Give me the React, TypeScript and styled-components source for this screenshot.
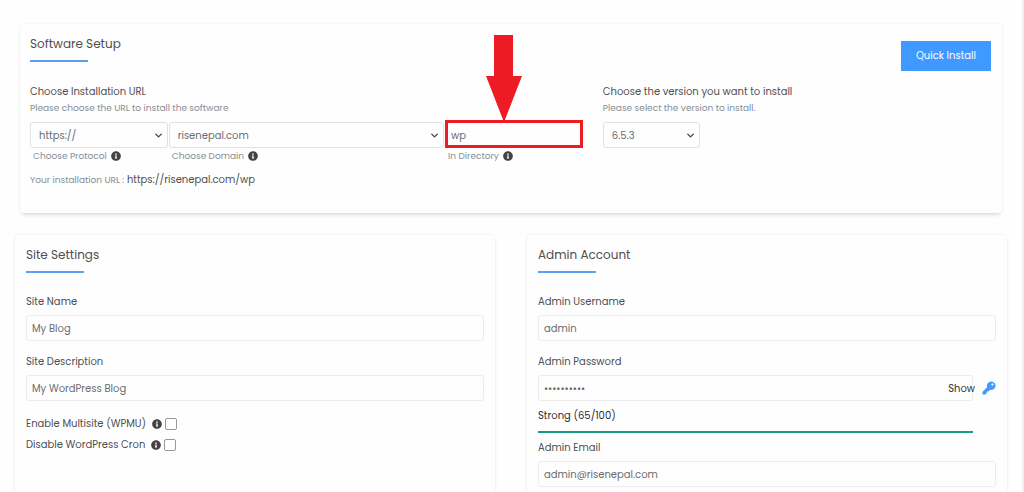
import React, { useState } from "react";
import styled, { createGlobalStyle, css } from "styled-components";
import { FaInfoCircle } from "react-icons/fa";
import { ChevronDown } from "lucide-react";

const GlobalStyle = createGlobalStyle`
  *, *::before, *::after { box-sizing: border-box; }
  body {
    margin: 0;
    background: #fefefe;
    color: #4f4f51;
    font-family: Poppins, Inter, sans-serif;
    font-size: 10px;
    line-height: 16px;
  }
  input, select, button { font: inherit; color: inherit; margin: 0; }
`;

const Page = styled.main`
  min-height: 100vh;
  padding: 24px 15px 20px;
  border-right: 2px solid #ebf1f6;
`;

const Card = styled.section`
  padding: 11px;
  background: #fefefe;
  border-radius: 4px;
  box-shadow: 0 0 3px rgba(0, 0, 0, 0.1);
`;

const SetupCard = styled(Card)`
  margin: 0 5px;
  padding: 11px 10px 25px;
  box-shadow: 0 0 3px rgba(0, 0, 0, 0.08), 0 4px 4px -2px rgba(0, 0, 0, 0.12);
`;

const SetupHeader = styled.header`
  display: flex;
  justify-content: space-between;
  align-items: flex-start;
`;

const Title = styled.h2`
  margin: 0;
  font-size: 12px;
  font-weight: 400;
  line-height: 18px;

  &::after {
    content: "";
    display: block;
    width: 58px;
    height: 2px;
    margin-top: 7px;
    background: #5a9ff0;
  }
`;

const InstallButton = styled.button`
  height: 30px;
  margin: 6px 1px 0 0;
  padding: 0 15px;
  border: 0;
  background: #4099ff;
  color: #fff;
`;

const SetupColumns = styled.div`
  display: grid;
  grid-template-columns: 7fr 5fr;
  margin: 13px -10px 0;

  > div { padding: 0 10px; }
`;

const Heading = styled.h3`
  margin: 0;
  font-size: 10px;
  font-weight: 400;
`;

const Hint = styled.p`
  margin: 0 0 6px;
  color: #868e96;
  font-size: 9px;
`;

const UrlParts = styled.div`
  display: grid;
  grid-template-columns: 1fr 2fr 1fr;
  gap: 1px;
`;

const Caption = styled.label`
  display: flex;
  align-items: center;
  gap: 4px;
  padding-left: 3px;
  color: #868e96;
  font-size: 9px;
`;

const InfoIcon = styled(FaInfoCircle)`
  flex: none;
  width: 10px;
  height: 10px;
  color: #424244;
`;

const SelectBox = styled.div<{ $narrow?: boolean }>`
  position: relative;
  width: ${(p) => (p.$narrow ? "97px" : "100%")};

  svg {
    position: absolute;
    top: 8px;
    right: 4px;
    pointer-events: none;
    color: #3f4650;
  }
`;

const control = css`
  display: block;
  width: 100%;
  height: 26px;
  border: 1px solid #ececee;
  border-radius: 3px;
  background: #fefefe;
  color: #6a6c70;
  outline: none;
`;

const Select = styled.select`
  ${control}
  padding: 2px 20px 0 8px;
  border-color: #dfe2e5;
  appearance: none;
`;

const TextInput = styled.input`
  ${control}
  padding: 2px 5px 0;
`;

const Highlight = styled.div`
  position: relative;
  height: 26px;
`;

const HighlightFrame = styled.div`
  position: absolute;
  inset: -2px 0 0;
  border: 3px solid #ed1c24;
  pointer-events: none;
`;

const Arrow = styled.svg`
  position: absolute;
  left: 41px;
  bottom: 100%;
  width: 36px;
  height: 88px;
  fill: #ed1c24;
  pointer-events: none;
`;

const UrlPreview = styled.p`
  margin: 8px 0 0;

  span {
    color: #868e96;
    font-size: 9px;
  }
`;

const Panels = styled.div`
  display: grid;
  grid-template-columns: 1fr 1fr;
  gap: 32px;
  margin-top: 22px;
`;

const Fields = styled.div`
  display: flex;
  flex-direction: column;
  gap: 13px;
  margin-top: 21px;
`;

const FieldBox = styled.div`
  label {
    display: block;
    margin-bottom: 5px;
  }
`;

const Checks = styled.div`
  display: grid;
  gap: 1px;
`;

const CheckRow = styled.div`
  display: flex;
  align-items: center;
  height: 20px;

  svg { margin: 0 3px 0 6px; }
`;

const Checkbox = styled.input`
  appearance: none;
  width: 12px;
  height: 12px;
  border: 1px solid #98989c;
  border-radius: 2px;
  background: #fff;

  &:checked { background: #4099ff; }
`;

const PasswordRow = styled.div`
  display: grid;
  grid-template-columns: 1fr 14px;
  align-items: center;
  gap: 9px;
`;

const PasswordBox = styled.div`
  position: relative;
`;

const PlainButton = styled.button`
  display: block;
  padding: 0;
  border: 0;
  background: none;
  color: #333;
`;

const ShowButton = styled(PlainButton)`
  position: absolute;
  top: 6px;
  right: -2px;
`;

const KeyButton = styled(PlainButton)`
  color: #4099ff;

  svg { display: block; width: 14px; height: 14px; }
`;

const Strength = styled.div`
  margin: 7px 23px -6px 0;
  color: #2f2f31;
`;

const StrengthBar = styled.div`
  height: 2px;
  margin-top: 7px;
  background: #179a88;
`;

function KeyIcon() {
  return (
    <svg viewBox="0 0 14 14" fill="currentColor" aria-hidden="true">
      <path
        fillRule="evenodd"
        d="M9.300 0.400a4.300 4.300 0 1 1-1.200 8.450L6.600 10.300H5.400V11.500H4.300V12.600L3.700 13.300Q3.500 13.500 3.200 13.500H1.100Q.500 13.500.500 12.900V11.200Q.500 10.900.700 10.700L5.200 6.100A4.300 4.300 0 0 1 9.300.400ZM10.400 2.500a1.100 1.100 0 1 0 0 2.200a1.100 1.100 0 0 0 0-2.200Z"
      />
    </svg>
  );
}

function Dropdown({ id, value, narrow, label }: { id: string; value: string; narrow?: boolean; label?: string }) {
  return (
    <SelectBox $narrow={narrow}>
      <Select id={id} aria-label={label}>
        <option>{value}</option>
      </Select>
      <ChevronDown size={11} strokeWidth={3} />
    </SelectBox>
  );
}

function Field({ id, label, value, type = "text" }: { id: string; label: string; value: string; type?: string }) {
  return (
    <FieldBox>
      <label htmlFor={id}>{label}</label>
      <TextInput id={id} type={type} defaultValue={value} />
    </FieldBox>
  );
}

function Check({ id, label }: { id: string; label: string }) {
  return (
    <CheckRow>
      <label htmlFor={id}>{label}</label>
      <InfoIcon />
      <Checkbox id={id} type="checkbox" />
    </CheckRow>
  );
}

export default function App() {
  const [visible, setVisible] = useState(false);
  return (
    <Page>
      <GlobalStyle />
      <SetupCard>
        <SetupHeader>
          <Title>Software Setup</Title>
          <InstallButton type="button">Quick Install</InstallButton>
        </SetupHeader>
        <SetupColumns>
          <div>
            <Heading>Choose Installation URL</Heading>
            <Hint>Please choose the URL to install the software</Hint>
            <UrlParts>
              <div>
                <Dropdown id="protocol" value="https://" />
                <Caption htmlFor="protocol">Choose Protocol <InfoIcon /></Caption>
              </div>
              <div>
                <Dropdown id="domain" value="risenepal.com" />
                <Caption htmlFor="domain">Choose Domain <InfoIcon /></Caption>
              </div>
              <div>
                <Highlight>
                  <TextInput id="directory" type="text" defaultValue="wp" />
                  <HighlightFrame />
                  <Arrow viewBox="0 0 36 88" aria-hidden="true">
                    <path d="M8 1H27V42H36L18.500 87H17.500L0 42H8Z" />
                  </Arrow>
                </Highlight>
                <Caption htmlFor="directory">In Directory <InfoIcon /></Caption>
              </div>
            </UrlParts>
            <UrlPreview>
              <span>Your installation URL :</span> https://risenepal.com/wp
            </UrlPreview>
          </div>
          <div>
            <Heading>Choose the version you want to install</Heading>
            <Hint>Please select the version to install.</Hint>
            <Dropdown id="version" value="6.5.3" narrow label="Version" />
          </div>
        </SetupColumns>
      </SetupCard>

      <Panels>
        <Card>
          <Title>Site Settings</Title>
          <Fields>
            <Field id="site-name" label="Site Name" value="My Blog" />
            <Field id="site-description" label="Site Description" value="My WordPress Blog" />
            <Checks>
              <Check id="multisite" label="Enable Multisite (WPMU)" />
              <Check id="cron" label="Disable WordPress Cron" />
            </Checks>
          </Fields>
        </Card>
        <Card>
          <Title>Admin Account</Title>
          <Fields>
            <Field id="username" label="Admin Username" value="admin" />
            <FieldBox>
              <label htmlFor="password">Admin Password</label>
              <PasswordRow>
                <PasswordBox>
                  <TextInput id="password" type={visible ? "text" : "password"} defaultValue="Wp7#kQ2!xz" />
                  <ShowButton type="button" onClick={() => setVisible(!visible)}>
                    {visible ? "Hide" : "Show"}
                  </ShowButton>
                </PasswordBox>
                <KeyButton type="button" aria-label="Generate password"><KeyIcon /></KeyButton>
              </PasswordRow>
              <Strength>
                Strong (65/100)
                <StrengthBar />
              </Strength>
            </FieldBox>
            <Field id="email" label="Admin Email" type="email" value="admin@risenepal.com" />
          </Fields>
        </Card>
      </Panels>
    </Page>
  );
}
